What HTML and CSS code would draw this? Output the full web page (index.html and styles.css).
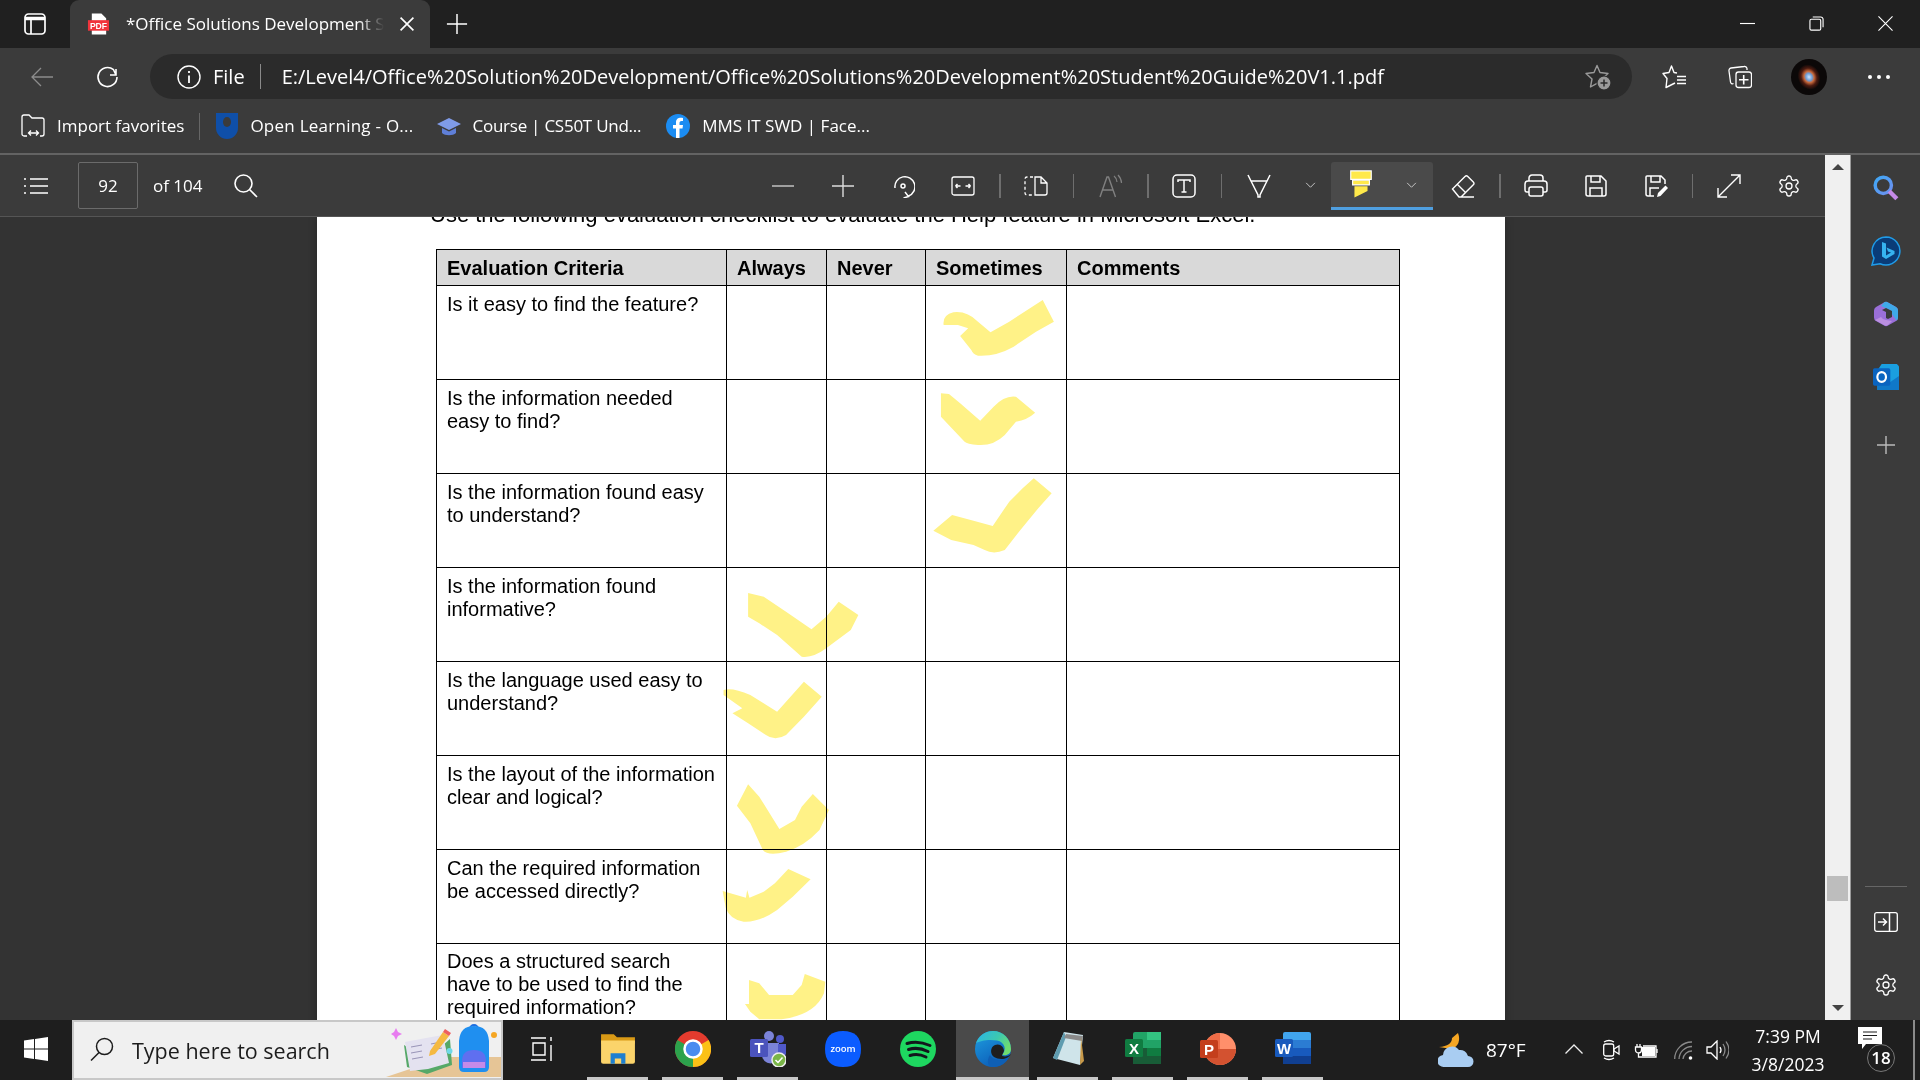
FILE: index.html
```html
<!DOCTYPE html>
<html lang="en">

<head>
    <meta charset="UTF-8">
    <title>Office Solutions Development Student Guide</title>
    <link rel="stylesheet" href="styles.css">
</head>

<body>
    <svg class="defs" aria-hidden="true">
        <symbol id="gear" viewBox="0 0 24 24">
            <path d="M12.22 2h-.44a2 2 0 0 0-2 2v.18a2 2 0 0 1-1 1.73l-.43.25a2 2 0 0 1-2 0l-.15-.08a2 2 0 0 0-2.73.73l-.22.38a2 2 0 0 0 .73 2.73l.15.1a2 2 0 0 1 1 1.72v.51a2 2 0 0 1-1 1.74l-.15.09a2 2 0 0 0-.73 2.73l.22.38a2 2 0 0 0 2.73.73l.15-.08a2 2 0 0 1 2 0l.43.25a2 2 0 0 1 1 1.73V20a2 2 0 0 0 2 2h.44a2 2 0 0 0 2-2v-.18a2 2 0 0 1 1-1.73l.43-.25a2 2 0 0 1 2 0l.15.08a2 2 0 0 0 2.73-.73l.22-.39a2 2 0 0 0-.73-2.73l-.15-.08a2 2 0 0 1-1-1.74v-.5a2 2 0 0 1 1-1.74l.15-.09a2 2 0 0 0 .73-2.73l-.22-.38a2 2 0 0 0-2.73-.73l-.15.08a2 2 0 0 1-2 0l-.43-.25a2 2 0 0 1-1-1.73V4a2 2 0 0 0-2-2z" />
            <circle cx="12" cy="12" r="3" />
        </symbol>
        <linearGradient id="edgeGrad" x1="0" y1="0" x2=".6" y2="1">
            <stop offset="0" stop-color="#1f9fe0" />
            <stop offset="1" stop-color="#0b5cb8" />
        </linearGradient>
        <linearGradient id="edgeTop" x1="0" y1="0" x2="1" y2=".5">
            <stop offset="0" stop-color="#2ab4e8" />
            <stop offset=".6" stop-color="#3cc8b0" />
            <stop offset="1" stop-color="#6fdc70" />
        </linearGradient>
        <radialGradient id="nebula">
            <stop offset="0" stop-color="#cfe4ff" />
            <stop offset=".28" stop-color="#6f9fd8" />
            <stop offset=".45" stop-color="#c7683a" />
            <stop offset=".7" stop-color="#4b1a10" />
            <stop offset="1" stop-color="#0b0808" />
        </radialGradient>
    </svg>

    <div class="titlebar">
        <div class="tab-toggle">
            <svg class="ico tog" viewBox="0 0 24 24"><rect x="2" y="2" width="20" height="20" rx="3.500" /><path d="M2 6.500h20" stroke-width="3.500" /><path d="M8 7v15" /></svg>
        </div>
        <div class="tab">
            <svg class="tab-pdf" viewBox="0 0 24 24"><path d="M5 1h10l5 5v17H5z" fill="#fff" /><rect x="1" y="8" width="22" height="11" fill="#f0343c" /><text x="12" y="17" class="pdf-text">PDF</text></svg>
            <span class="tab-title">*Office Solutions Development Student Guide V1.1.pdf</span>
            <svg class="ico tab-close" viewBox="0 0 24 24"><path d="M5 5l14 14M19 5L5 19" stroke-width="1.800" /></svg>
        </div>
        <svg class="ico tab-new" viewBox="0 0 24 24"><path d="M12 1v22M1 12h22" stroke-width="1.600" /></svg>
        <div class="win-controls">
            <div class="win-btn"><svg class="ico small" viewBox="0 0 16 16"><path d="M0 8h16" /></svg></div>
            <div class="win-btn"><svg class="ico small" viewBox="0 0 16 16"><rect x="1" y="3.500" width="11.500" height="11.500" rx="1.500" /><path d="M4 1h8.500A2.500 2.500 0 0 1 15 3.500V12" /></svg></div>
            <div class="win-btn"><svg class="ico small" viewBox="0 0 16 16"><path d="M.5.5l15 15M15.500.5l-15 15" /></svg></div>
        </div>
    </div>

    <div class="navbar">
        <svg class="ico nav-back" viewBox="0 0 24 24"><path d="M23 12H2M11 3l-9 9 9 9" /></svg>
        <svg class="ico nav-reload" viewBox="0 0 24 24"><path d="M20 4v6h-6M21 12a9.500 9.500 0 1 1-3.500-7.300L20 10" stroke-width="1.600" /></svg>
        <div class="address">
            <svg class="ico info" viewBox="0 0 24 24"><circle cx="12" cy="12" r="11" stroke-width="1.400" /><path d="M12 10.500V18M12 6v2" stroke-width="1.800" /></svg>
            <span class="addr-file">File</span>
            <span class="addr-sep"></span>
            <span class="addr-url">E:/Level4/Office%20Solution%20Development/Office%20Solutions%20Development%20Student%20Guide%20V1.1.pdf</span>
            <svg class="ico star-add" viewBox="0 0 26 26"><path d="M12 1.500L15 8.500L23 9.500L17 15L18.500 23L12 19.300L5.500 23L7 15L1 9.500L9 8.500Z" stroke="#9a9a9a" stroke-linejoin="round" stroke-width="1.400" /><circle cx="19" cy="19" r="7" fill="#9a9a9a" stroke="#2b2b2b" stroke-width="1.200" /><path d="M19 15.500v7M15.500 19h7" stroke="#2b2b2b" stroke-width="1.500" /></svg>
        </div>
        <svg class="ico nav-fav" viewBox="0 0 24 24"><path d="M15 8L12 7.500L9.500 1L7 7.500L1 8.500L5 13.500L4 22.500L10 19.500L13 18" stroke-linejoin="round" stroke-width="1.400" /><path d="M15 11.500h9M15 15h9M15 18.500h9" stroke-width="1.400" /></svg>
        <svg class="ico nav-coll" viewBox="0 0 24 24"><path d="M19 5V3.500A2.500 2.500 0 0 0 16 1.500L3 3A2.500 2.500 0 0 0 1 6l1.500 11a2 2 0 0 0 3 1.500" /><rect x="8" y="7" width="15.500" height="15.500" rx="2.500" /><path d="M15.700 10v9.500M11 14.800h9.500" stroke-width="1.600" /></svg>
        <svg class="avatar" viewBox="0 0 36 36"><circle cx="18" cy="18" r="18" fill="#0b0808" /><ellipse cx="18" cy="18" rx="11" ry="13" fill="url(#nebula)" transform="rotate(-25 18 18)" /></svg>
        <div class="nav-dots"><span></span><span></span><span></span></div>
    </div>

    <div class="bookmarks">
        <svg class="ico bm-import" viewBox="0 0 24 24"><path d="M6 22H3a2 2 0 0 1-2-2V3a2 2 0 0 1 2-2h5l3 3h10a2 2 0 0 1 2 2v14a2 2 0 0 1-2 2h-2M8 19h9M10 16.500L7.500 19l2.500 2.500M15 16.500l2.500 2.500-2.500 2.500" /></svg>
        <span class="bm-label">Import favorites</span>
        <span class="bm-sep"></span>
        <svg class="bm-icon" viewBox="0 0 22 26"><path d="M0 0h22v15a11 11 0 0 1-22 0z" fill="#0f4fa8" /><ellipse cx="11" cy="9" rx="4" ry="5" fill="#3b3b3b" /></svg>
        <span class="bm-label open">Open Learning - O...</span>
        <svg class="bm-icon cap" viewBox="0 0 24 24"><path d="M12 4L0 10l12 6 12-6z" fill="#7f9be8" /><path d="M5 14v5c3 3 11 3 14 0v-5l-7 3.500z" fill="#5f7fd8" /></svg>
        <span class="bm-label course">Course | CS50T Und...</span>
        <svg class="bm-icon fb" viewBox="0 0 24 24"><circle cx="12" cy="12" r="12" fill="#1b8cf2" /><path d="M13.500 24v-9.500h3l.5-3.500h-3.500V9c0-1 .5-2 2-2H17V4c-3.500-.7-7 0-7 4.500V11H7v3.500h3V24z" fill="#fff" /></svg>
        <span class="bm-label">MMS IT SWD | Face...</span>
    </div>

    <div class="workspace">
        <div class="viewer">
            <div class="pdf-toolbar">
                <svg class="ico toc" viewBox="0 0 24 24"><path d="M6 5h18M6 12h18M6 19h18M0 5h2M0 12h2M0 19h2" stroke-width="1.600" /></svg>
                <div class="page-input">92</div>
                <span class="page-count">of 104</span>
                <svg class="ico pdf-search" viewBox="0 0 24 24"><circle cx="9.500" cy="9.500" r="8.500" stroke-width="1.600" /><path d="M15.500 15.500L23 23" stroke-width="1.600" /></svg>

                <div class="tool-group">
                    <div class="tool"><svg class="ico" viewBox="0 0 24 24"><path d="M1 12h22" stroke-width="1.400" stroke="#ccc" /></svg></div>
                    <div class="tool"><svg class="ico" viewBox="0 0 24 24"><path d="M1 12h22M12 1v22" stroke-width="1.400" stroke="#ddd" /></svg></div>
                    <div class="tool"><svg class="ico" viewBox="0 0 24 24"><path d="M4 14A10 10 0 1 1 17.500 22M14 18l3.500 4.500-5 1.500" stroke-width="1.500" /><circle cx="12" cy="12" r="2" stroke-width="1.500" /></svg></div>
                    <div class="tool"><svg class="ico" viewBox="0 0 24 24"><rect x="1" y="3" width="22" height="18" rx="2" /><path d="M4.500 12h5M4.500 12l2-2M4.500 12l2 2M19.500 12h-5M19.500 12l-2-2M19.500 12l-2 2" stroke-width="1.500" /></svg></div>
                    <span class="tool-sep"></span>
                    <div class="tool"><svg class="ico" viewBox="0 0 24 24"><path d="M9 3H3a2 2 0 0 0-2 2v14a2 2 0 0 0 2 2h6" stroke-dasharray="3 2.500" /><path d="M11 3h6l6 6v10a2 2 0 0 1-2 2H11zM17 3v6h6" /></svg></div>
                    <span class="tool-sep thin"></span>
                    <div class="tool"><svg class="ico" viewBox="0 0 24 24"><path d="M1 23L8 3h1.500l7 20M4 16h10" stroke="#808080" stroke-width="1.400" /><path d="M15 2a8 8 0 0 1 3 6M19 1a12 12 0 0 1 3.500 8" stroke="#808080" stroke-width="1.200" /></svg></div>
                    <span class="tool-sep"></span>
                    <div class="tool"><svg class="ico" viewBox="0 0 24 24"><rect x="1" y="1" width="22" height="22" rx="4" stroke-width="1.500" /><path d="M6 8V6h12v2M12 6v12M9.500 18h5" stroke-width="1.500" /></svg></div>
                    <span class="tool-sep thin"></span>
                    <div class="tool"><svg class="ico" viewBox="0 0 24 24"><path d="M1 1l3 6h16l3-6M4 7l7 14v2h2v-2l7-14" stroke-width="1.500" /></svg></div>
                    <div class="tool-chev"><svg class="chev" viewBox="0 0 12 8"><path d="M1 1l5 5 5-5" /></svg></div>
                    <div class="tool-active">
                        <svg class="hl-icon" viewBox="0 0 24 30"><path d="M1 1h22v9H1z" fill="#ffe94a" stroke="#fff" stroke-width="1.200" /><path d="M3 11h18v5H3z" fill="#ffe94a" stroke="#fff" stroke-width="1.200" /><path d="M5 17.500h14v5l-14 7z" fill="#ffe94a" /></svg>
                        <svg class="chev" viewBox="0 0 12 8"><path d="M1 1l5 5 5-5" /></svg>
                    </div>
                    <div class="tool"><svg class="ico" viewBox="0 0 24 24"><path d="M1.500 15L14 2.500a2 2 0 0 1 2.800 0l5.500 5.500a2 2 0 0 1 0 2.800L10 23H8zM6 10l8 8M8 23h15" stroke-width="1.400" /></svg></div>
                    <span class="tool-sep"></span>
                    <div class="tool"><svg class="ico" viewBox="0 0 24 24"><path d="M5 7V4a3 3 0 0 1 3-3h8a3 3 0 0 1 3 3v3M5 18H3a2 2 0 0 1-2-2V10a3 3 0 0 1 3-3h16a3 3 0 0 1 3 3v6a2 2 0 0 1-2 2h-2" stroke-width="1.500" /><rect x="5" y="13" width="14" height="9" rx="2" stroke-width="1.500" /></svg></div>
                    <div class="tool"><svg class="ico" viewBox="0 0 24 24"><path d="M3 2h14l5 5v13a2 2 0 0 1-2 2H4a2 2 0 0 1-2-2V3a1 1 0 0 1 1-1zM7 2v6h9V2M6 22v-8h12v8" stroke-width="1.500" /></svg></div>
                    <div class="tool"><svg class="ico" viewBox="0 0 24 24"><path d="M10 22H4a2 2 0 0 1-2-2V3a1 1 0 0 1 1-1h14l4 4v4M7 2v6h9V2M6 22v-8h9" stroke-width="1.500" /><path d="M13 23l1-4 7.500-7.500 2.500 2.500L16.500 22z" fill="#fff" stroke="none" /></svg></div>
                    <span class="tool-sep end"></span>
                    <div class="tool"><svg class="ico" viewBox="0 0 24 24"><path d="M14 1h9v9M23 1L1 23M1 14v9h9" stroke-width="1.400" /></svg></div>
                    <div class="tool"><svg class="ico" viewBox="0 0 24 24"><use href="#gear" /></svg></div>
                </div>
            </div>

            <div class="doc">
                <div class="page">
                    <p class="page-intro">Use the following evaluation checklist to evaluate the Help feature in Microsoft Excel.</p>
                    <table class="checklist">
                        <colgroup>
                            <col class="c-criteria"><col class="c-always"><col class="c-never"><col class="c-some"><col class="c-comment">
                        </colgroup>
                        <thead>
                            <tr><th>Evaluation Criteria</th><th>Always</th><th>Never</th><th>Sometimes</th><th>Comments</th></tr>
                        </thead>
                        <tbody>
                            <tr><td>Is it easy to find the feature?</td><td></td><td></td><td></td><td></td></tr>
                            <tr><td>Is the information needed<br>easy to find?</td><td></td><td></td><td></td><td></td></tr>
                            <tr><td>Is the information found easy<br>to understand?</td><td></td><td></td><td></td><td></td></tr>
                            <tr><td>Is the information found<br>informative?</td><td></td><td></td><td></td><td></td></tr>
                            <tr><td>Is the language used easy to<br>understand?</td><td></td><td></td><td></td><td></td></tr>
                            <tr><td>Is the layout of the information<br>clear and logical?</td><td></td><td></td><td></td><td></td></tr>
                            <tr><td>Can the required information<br>be accessed directly?</td><td></td><td></td><td></td><td></td></tr>
                            <tr class="row-tight"><td>Does a structured search<br>have to be used to find the<br>required information?</td><td></td><td></td><td></td><td></td></tr>
                        </tbody>
                    </table>
                </div>
                <!-- highlighter strokes drawn over the table -->
                <svg class="ticks" viewBox="0 217 1825 803">
                    <g transform="translate(420 200) scale(.4464 .3333)">
                        <path d="M1173 375Q1170 345 1195 337Q1225 332 1250 365L1278 397L1320 365L1395 300L1420 365L1380 395L1330 440Q1290 470 1250 467Q1238 462 1235 450L1210 408L1228 385L1205 375Z" />
                        <path d="M1167 580L1185 582L1210 610L1255 662L1285 620Q1310 585 1335 590L1378 638Q1360 660 1335 665L1310 705Q1285 738 1250 735Q1225 732 1220 725L1195 690L1167 650Z" />
                        <path d="M1375 835L1415 880L1385 925L1345 990L1310 1050Q1285 1065 1265 1050L1240 1035L1190 1020L1150 992L1192 945L1240 962L1283 978L1320 905L1350 865Z" />
                    </g>
                    <g transform="translate(420 600) scale(.4464 .3333)">
                        <path d="M735-21L770-10L820 35L877 88L910 50L938 5L982 45L965 90L910 145Q880 175 855 170L838 150L800 105L760 70L735 50Z" />
                        <path d="M680 270Q700 262 740 285L800 335L860 245L900 290L860 350L820 405Q795 425 775 405L735 370L700 340L722 325L680 285Z" />
                        <path d="M735 553L760 590L805 687L840 660L855 620L880 582L916 630L895 690Q860 740 820 755Q780 770 768 750L740 670L710 617Z" />
                        <path d="M678 873L730 893L733 870L738 893L770 875L795 850L825 807L875 838L835 890L800 930Q760 968 725 965Q695 960 685 925Z" />
                        <path d="M737 1140L760 1150L782 1185H835L855 1155L862 1122L908 1145L905 1180Q885 1245 810 1258H760L740 1235L728 1212H737Z" />
                    </g>
                </svg>
            </div>
        </div>

        <div class="scrollbar">
            <span class="arrow up"></span>
            <span class="thumb"></span>
            <span class="arrow down"></span>
        </div>

        <div class="sidebar">
            <svg class="side-search" viewBox="0 0 24 24"><defs><linearGradient id="sg" x1="0" y1="0" x2="1" y2="1"><stop offset="0" stop-color="#3ea8f5" /><stop offset="1" stop-color="#6f8ff0" /></linearGradient></defs><circle cx="9.500" cy="9.500" r="7.500" fill="none" stroke="url(#sg)" stroke-width="3.200" /><path d="M15 15l7 7" stroke="#c58ae8" stroke-width="4" /></svg>
            <svg class="side-icon bing" viewBox="0 0 30 30"><path d="M15 1a14 14 0 1 1-6 26.700L1 29l2-7A14 14 0 0 1 15 1z" fill="#0a3c78" stroke="#1f9be8" stroke-width="1.500" /><path d="M11 6l4 1.500v12l5-3-3-1-1.500-4 8 3.500v3l-8.500 5-4-2.500z" fill="#36b3f0" /></svg>
            <svg class="side-icon copilot" viewBox="0 0 24 26"><path d="M10 1.500q2-1.500 4 0l8 4.500q2 1 2 3.500v7q0 2.500-2 3.500l-8 4.500q-2 1.500-4 0l-8-4.500q-2-1-2-3.500v-7q0-2.500 2-3.500z" fill="#9a6fd8" /><path d="M10 1.500q2-1.500 4 0l8 4.500q2 1 2 3.500v7q0 2-1.500 3L18 13q0-3-3-4.500L7 5z" fill="#3fa9e8" /><path d="M8 9l4-2 6 3v6l-4 2-2-1v-6z" fill="#3b3b3b" /><path d="M1 19l6-3q2 3 5 3l6 1-4 4q-2 1.500-4 0z" fill="#bb8fe0" /></svg>
            <svg class="side-icon outlook" viewBox="0 0 24 24"><path d="M8 0h14l2 2v22H4V6z" fill="#1a9fe0" /><path d="M4 13l10 5 10-7v13H4z" fill="#0f78c8" /><rect x="0" y="4" width="16" height="16" rx="1.500" fill="#0a64c0" /><ellipse cx="8" cy="12" rx="4" ry="4.500" fill="none" stroke="#fff" stroke-width="2" /></svg>
            <svg class="ico side-plus" viewBox="0 0 18 18"><path d="M9 0v18M0 9h18" stroke="#bbb" stroke-width="1.400" /></svg>
            <span class="side-rule"></span>
            <svg class="ico side-panel" viewBox="0 0 24 20"><rect x=".7" y=".7" width="22.600" height="18.600" rx="2" /><path d="M15.500 1v18M4 10h8M9 6.500l3.500 3.500L9 13.500" stroke-width="1.500" /></svg>
            <svg class="ico side-gear" viewBox="0 0 24 24"><use href="#gear" /></svg>
        </div>
    </div>

    <div class="taskbar">
        <div class="start">
            <svg class="start-logo" viewBox="0 0 24 24"><path d="M0 3.400l10-1.400v9.500H0zM11 1.900L24 0v11.500H11zM0 12.500h10V22L0 20.600zM11 12.500h13V24l-13-1.900z" fill="#fff" /></svg>
        </div>
        <div class="search">
            <svg class="search-glass" viewBox="0 0 24 24"><circle cx="14.500" cy="9.500" r="8" fill="none" stroke="#1c1c1c" stroke-width="1.500" /><path d="M9 15.500L1 23.500" stroke="#1c1c1c" stroke-width="1.500" /></svg>
            <span class="search-text">Type here to search</span>
            <svg class="search-art" viewBox="385 1022 118 58">
                <path d="M386 1078L446 1058H503V1078z" fill="#e6c596" />
                <path d="M404 1046L427 1060L450 1040L452 1066L427 1075L407 1068z" fill="#56a868" />
                <path d="M405 1043L426 1039L428 1070L410 1072zM428 1070L426 1039L443 1036L449 1064z" fill="#e4e2f0" />
                <path d="M411 1048L422 1046M411 1054L422 1052M412 1060L423 1058M431 1045L441 1043M431 1051L442 1049" stroke="#9a96b8" stroke-width="1.200" />
                <path d="M430 1052L443 1033L449 1037L435 1055L429 1057z" fill="#f5b942" />
                <path d="M443 1033L445 1030L451 1034L449 1037z" fill="#ee5f5f" />
                <path d="M396 1029L398 1033L402 1035L398 1037L396 1041L394 1037L391 1035L394 1033z" fill="#e87cf0" />
                <circle cx="494" cy="1036" r="3" fill="#f5a623" />
                <circle cx="449.500" cy="1052" r="3" fill="#6fd8e8" />
                <path d="M470 1030a4 4 0 0 1 8 0" fill="none" stroke="#1f6fe0" stroke-width="2" />
                <path d="M459 1042Q460 1027 474 1027Q488 1027 489 1042V1068Q489 1073 484 1073H464Q459 1073 459 1068z" fill="#1f8ff0" />
                <path d="M462 1062Q462 1051 474 1051Q486 1051 486 1062V1069H462z" fill="#5f6ff0" />
                <path d="M463 1063H485V1069H463z" fill="#c58ae8" />
            </svg>
        </div>
        <div class="task-view">
            <svg class="ico" viewBox="0 0 24 24"><path d="M1 1h15M1 23h15M3 6h12v12H3zM21 0v4M21 8v16" stroke-width="1.400" /></svg>
        </div>
        <div class="task-item on">
            <svg class="task-icon" viewBox="0 0 34 34"><path d="M1 3h12l3 3h17v6H1z" fill="#d99a16" /><path d="M1 9h32v20a2 2 0 0 1-2 2H3a2 2 0 0 1-2-2z" fill="#fbd46b" /><path d="M10 31V21h14v10h-4v-5h-6v5z" fill="#1e7fd0" /></svg>
        </div>
        <div class="task-item on">
            <svg class="task-icon" viewBox="0 0 36 36"><circle cx="18" cy="18" r="18" fill="#e33b2e" /><path d="M18 18L33.600 9A18 18 0 0 1 18 36z" fill="#fbc116" /><path d="M18 18V36A18 18 0 0 1 2.400 9z" fill="#2ca24c" /><circle cx="18" cy="18" r="8.500" fill="#4a8cf0" stroke="#fff" stroke-width="2.500" /></svg>
        </div>
        <div class="task-item on">
            <svg class="task-icon" viewBox="0 0 36 36"><circle cx="19" cy="5" r="5" fill="#7b83d8" /><circle cx="30" cy="8" r="4" fill="#5059c9" /><path d="M12 12h17v12a8 8 0 0 1-17 0z" fill="#7b83d8" /><path d="M28 13h8v10a5 5 0 0 1-8 2z" fill="#5059c9" /><rect x="0" y="8" width="18" height="18" rx="1.500" fill="#4b53bc" /><text x="9" y="22" class="mini-text">T</text><circle cx="29" cy="29" r="7" fill="#7ab648" stroke="#eee" stroke-width="1.500" /><path d="M25.500 29l2.500 2.500 4.500-5" fill="none" stroke="#fff" stroke-width="1.500" /></svg>
        </div>
        <div class="task-item">
            <svg class="task-icon" viewBox="0 0 36 36"><path d="M18 0C30 0 36 6 36 18S30 36 18 36 0 30 0 18 6 0 18 0z" fill="#0b5cff" /><text x="18" y="21" class="zoom-text">zoom</text></svg>
        </div>
        <div class="task-item">
            <svg class="task-icon" viewBox="0 0 36 36"><circle cx="18" cy="18" r="18" fill="#1ed760" /><path d="M7 12.500Q18 9 30 14.500M8.500 18.500Q18 15.500 28 20.500M10 24.500Q18 22 26 26" fill="none" stroke="#12161c" stroke-width="3" stroke-linecap="round" /></svg>
        </div>
        <div class="task-item active">
            <svg class="task-icon" viewBox="0 0 36 36"><circle cx="18" cy="18" r="18" fill="url(#edgeGrad)" /><path d="M1 12C4 4 11 0 18 0C28 0 36 8 36 18C36 23 32 25 27 24C32 19 30 11 22 9.500C13 8 5 10 1 12Z" fill="url(#edgeTop)" /><path d="M36 22C33 28 24 28 19 25C15 22 15 15 20 13C25 11 29 15 29 19C28 21 27 23 27 24C31 25 34 24 36 22Z" fill="#1e1e1e" transform="translate(0 1)" /><path d="M15 24C18 29 26 31 33 28C29 34 23 36 18 36C13 36 11 30 15 24Z" fill="#0f5fb4" /></svg>
        </div>
        <div class="task-item on">
            <svg class="task-icon note" viewBox="0 0 32 36"><path d="M12 1L31 4L28 34L1 27z" fill="#cfe4ea" /><path d="M12 1L1 27L5 29L14 6z" fill="#5f9cb0" /><path d="M14 3l17 2-1 5-18-3z" fill="#8a8a8a" /><path d="M29 6L32 30L28 34z" fill="#c89a4a" /></svg>
        </div>
        <div class="task-item on">
            <svg class="task-icon" viewBox="0 0 36 34"><rect x="8" y="0" width="28" height="32" rx="2" fill="#21a366" /><rect x="22" y="0" width="14" height="8" fill="#33c481" /><rect x="22" y="16" width="14" height="8" fill="#107c41" /><rect x="8" y="16" width="14" height="16" fill="#185c37" /><rect x="22" y="24" width="14" height="8" fill="#185c37" /><rect x="0" y="7" width="18" height="18" rx="1.500" fill="#107c41" /><text x="9" y="21.500" class="mini-text">X</text></svg>
        </div>
        <div class="task-item on">
            <svg class="task-icon" viewBox="0 0 36 34"><circle cx="20" cy="17" r="16" fill="#ff8f6b" /><path d="M20 17H36A16 16 0 0 1 4 17z" fill="#d35230" /><path d="M20 1A16 16 0 0 0 4 17H20z" fill="#ed6c47" /><rect x="0" y="8" width="18" height="18" rx="1.500" fill="#c43e1c" /><text x="9" y="22.500" class="mini-text">P</text></svg>
        </div>
        <div class="task-item on">
            <svg class="task-icon" viewBox="0 0 36 34"><rect x="8" y="0" width="28" height="32" rx="2" fill="#41a5ee" /><rect x="8" y="8" width="28" height="8" fill="#2b7cd3" /><rect x="8" y="16" width="28" height="8" fill="#185abd" /><rect x="8" y="24" width="28" height="8" fill="#103f91" /><rect x="0" y="7" width="18" height="18" rx="1.500" fill="#185abd" /><text x="9" y="21.500" class="mini-text">W</text></svg>
        </div>

        <div class="tray">
            <svg class="tray-weather" viewBox="0 0 36 36"><path d="M20 1Q24 12 14 17L1 15Q14 14 14 6z" fill="#f5a623" /><path d="M6 35a6 6 0 0 1-1-12 9 9 0 0 1 16-5 8 8 0 0 1 9 6 5.500 5.500 0 0 1 0 11z" fill="#a9cdf2" /></svg>
            <span class="tray-temp">87°F</span>
            <svg class="ico tray-chevron" viewBox="0 0 18 10"><path d="M.5 9.500L9 1l8.500 8.500" stroke="#eee" /></svg>
            <svg class="ico tray-meet" viewBox="0 0 17 22"><rect x=".7" y="5" width="10" height="12" rx="2" /><path d="M11 10l5-3v8l-5-3zM1 3q5-3 10 0M1 19q5 3 10 0" /></svg>
            <svg class="ico tray-batt" viewBox="0 0 24 16"><path d="M3 2v3M6 2v3M1.500 5h6v3a3 3 0 0 1-6 0zM4.500 11v4H22V4H9" /><rect x="8" y="5" width="13" height="9" fill="#fff" stroke="none" /><path d="M23 7v4" /></svg>
            <svg class="ico tray-wifi" viewBox="0 0 19 19"><path d="M.7 18A17 17 0 0 1 18 1M5 18A13 13 0 0 1 18 5.500M9 18A9 9 0 0 1 18 10" stroke="#8a8a8a" /><circle cx="16.500" cy="17" r="1.800" fill="#fff" stroke="none" /></svg>
            <svg class="ico tray-vol" viewBox="0 0 23 20"><path d="M1 7v6h4l6 6V1L5 7z" /><path d="M14 7q2 3 0 6" /><path d="M17 4q4 6 0 12M20 1.500q6 8.500 0 17" stroke="#8a8a8a" /></svg>
            <div class="clock"><span>7:39 PM</span><span>3/8/2023</span></div>
            <div class="notif">
                <svg class="notif-icon" viewBox="0 0 24 22"><path d="M0 0h24v17H8l-4 5v-5H0z" fill="#fff" /><path d="M5 5h14M5 8.500h14M5 12h9" stroke="#1c1c1c" stroke-width="1.200" /></svg>
                <span class="notif-badge">18</span>
            </div>
            <span class="tray-line"></span>
        </div>
    </div>
</body>

</html>
```

FILE: styles.css
```css
* {
    box-sizing: border-box;
}

html,
body {
    margin: 0;
    padding: 0;
    width: 1920px;
    height: 1080px;
    overflow: hidden;
}

body {
    display: flex;
    flex-direction: column;
    background-color: #3b3b3b;
    color: #fff;
    font-family: "Open Sans", "Noto Sans", sans-serif;
}

.defs {
    position: absolute;
    width: 0;
    height: 0;
}

svg {
    display: block;
    flex: none;
}

.ico {
    width: 24px;
    height: 24px;
    fill: none;
    stroke: #fff;
    stroke-width: 1.3;
}

.ico.small {
    width: 15px;
    height: 15px;
    stroke-width: 1.2;
}

/* title bar */
.titlebar {
    display: flex;
    align-items: stretch;
    height: 48px;
    background-color: #202020;
}

.tab-toggle {
    display: flex;
    align-items: center;
    justify-content: center;
    width: 70px;
    padding-bottom: 1px;
}

.ico.tog {
    stroke-width: 1.700;
}

.tab {
    display: flex;
    align-items: center;
    width: 360px;
    padding-left: 17px;
    background-color: #3b3b3b;
    border-radius: 9px 9px 0 0;
}

.tab-pdf {
    width: 23px;
    height: 24px;
}

.pdf-text {
    font-family: "Liberation Sans", sans-serif;
    font-size: 9px;
    font-weight: 700;
    fill: #fff;
    text-anchor: middle;
}

.tab-title {
    width: 258px;
    margin-left: 16px;
    margin-bottom: 2px;
    font-size: 17px;
    white-space: nowrap;
    overflow: hidden;
    -webkit-mask-image: linear-gradient(to right, #000 90%, transparent);
    mask-image: linear-gradient(to right, #000 90%, transparent);
}

.tab-close {
    width: 22px;
    height: 22px;
    margin-left: 12px;
}

.tab-new {
    align-self: center;
    width: 22px;
    height: 22px;
    margin-left: 16px;
}

.win-controls {
    display: flex;
    margin-left: auto;
    margin-right: 0;
}

.win-btn {
    display: flex;
    align-items: center;
    justify-content: center;
    width: 69px;
    padding-bottom: 2px;
}

/* address row */
.navbar {
    display: flex;
    align-items: center;
    height: 56px;
    padding: 1px 0 0 30px;
}

.nav-back {
    stroke: #8c8c8c;
}

.nav-reload {
    margin-left: 42px;
}

.address {
    display: flex;
    align-items: center;
    width: 1482px;
    height: 45px;
    margin-left: 30px;
    padding-left: 27px;
    background-color: #2b2b2b;
    border-radius: 23px;
}

.addr-file {
    margin-left: 12px;
    font-size: 20px;
}

.addr-sep {
    width: 1px;
    height: 25px;
    margin: 0 21px 0 15px;
    background-color: #8a8a8a;
}

.addr-url {
    font-size: 20px;
    white-space: nowrap;
}

.star-add {
    width: 26px;
    height: 26px;
    margin-left: auto;
    margin-right: 21px;
}

.nav-fav {
    margin-left: 30px;
}

.nav-coll {
    margin-left: 42px;
}

.avatar {
    width: 36px;
    height: 36px;
    margin-left: 39px;
}

.nav-dots {
    display: flex;
    gap: 5px;
    margin-left: 41px;
}

.nav-dots span {
    width: 4px;
    height: 4px;
    background-color: #fff;
    border-radius: 50%;
}

/* favorites row */
.bookmarks {
    display: flex;
    align-items: center;
    height: 51px;
    padding: 0 0 5px 21px;
    border-bottom: 2px solid #636363;
    font-size: 17px;
}

.bm-label {
    margin-left: 12px;
    margin-bottom: 1px;
    white-space: nowrap;
}

.bm-label.open {
    letter-spacing: 0.25px;
}

.bm-label.course {
    letter-spacing: -0.25px;
}

.bm-sep {
    width: 1px;
    height: 27px;
    margin: 0 16px 0 15px;
    background-color: #666;
}

.bm-icon {
    width: 22px;
    height: 26px;
}

.bm-icon.cap {
    width: 24px;
    height: 24px;
    margin-left: 23px;
}

.bm-icon.fb {
    width: 24px;
    height: 24px;
    margin-left: 25px;
}

/* main area */
.workspace {
    display: flex;
    height: 865px;
}

.viewer {
    display: flex;
    flex-direction: column;
    width: 1825px;
}

.pdf-toolbar {
    display: flex;
    align-items: center;
    height: 62px;
    padding: 0 6px 0 24px;
    border-bottom: 1px solid #555;
}

.page-input {
    width: 60px;
    height: 47px;
    margin-left: 30px;
    border: 1px solid #6b6b6b;
    border-radius: 2px;
    font-size: 17px;
    line-height: 45px;
    text-align: center;
}

.page-count {
    margin-left: 15px;
    font-size: 17px;
    white-space: nowrap;
}

.pdf-search {
    margin-left: 31px;
}

.tool-group {
    display: flex;
    align-items: center;
    margin-left: auto;
}

.tool {
    display: flex;
    align-items: center;
    justify-content: center;
    width: 60px;
    height: 48px;
}

.tool-sep {
    width: 2px;
    height: 24px;
    margin: 0 5.500px;
    background-color: #6e6e6e;
}

.tool-sep.thin {
    width: 1px;
    margin: 0 7px;
}

.tool-sep.end {
    width: 1px;
    margin: 0 6px;
}

.tool-chev {
    display: flex;
    align-items: center;
    justify-content: center;
    width: 42px;
    height: 48px;
}

.chev {
    width: 11px;
    height: 7px;
    fill: none;
    stroke: #d5d5d5;
    stroke-width: 1;
}

.tool-active {
    display: flex;
    align-items: center;
    width: 102px;
    height: 48px;
    padding-left: 18px;
    background-color: #4a4a4a;
    border-bottom: 3px solid #4f9fe0;
    border-radius: 3px 3px 0 0;
}

.hl-icon {
    width: 24px;
    height: 28px;
}

.tool-active .chev {
    margin-left: 33px;
    margin-top: 3px;
}

.doc {
    position: relative;
    flex: 1;
    overflow: hidden;
    background-color: #333;
}

.page {
    width: 1188px;
    height: 900px;
    margin-left: 317px;
    padding: 1px 0 0 119px;
    overflow: hidden;
    background-color: #fff;
    box-shadow: 0 0 8px rgba(0, 0, 0, 0.25);
    color: #000;
    font-family: "Liberation Sans", Arial, sans-serif;
    font-size: 20px;
    line-height: 23px;
}

.page-intro {
    margin: -16px 0 22px -6px;
    font-size: 22px;
    line-height: 25px;
    white-space: nowrap;
}

.checklist {
    table-layout: fixed;
    width: 964px;
    border-collapse: collapse;
}

.c-criteria {
    width: 290px;
}

.c-always {
    width: 100px;
}

.c-never {
    width: 99px;
}

.c-some {
    width: 141px;
}

.checklist th,
.checklist td {
    padding: 0 0 0 10px;
    border: 1px solid #000;
    text-align: left;
    vertical-align: top;
}

.checklist th {
    height: 36px;
    padding-top: 7px;
    background-color: #d9d9d9;
    font-weight: 700;
}

.checklist td {
    height: 94px;
    padding-top: 7px;
    white-space: nowrap;
}

.checklist .row-tight td {
    padding-top: 6px;
}

.ticks {
    position: absolute;
    top: 0;
    left: 0;
    width: 1825px;
    height: 803px;
    fill: #fff287;
    mix-blend-mode: multiply;
    pointer-events: none;
}

/* page scrollbar */
.scrollbar {
    display: flex;
    flex-direction: column;
    align-items: center;
    width: 26px;
    padding: 9px 0 9px;
    background-color: #f0f0f0;
    border-right: 1px solid #9a9a9a;
}

.arrow {
    width: 0;
    height: 0;
    border-left: 6px solid transparent;
    border-right: 6px solid transparent;
}

.arrow.up {
    border-bottom: 6px solid #444;
}

.arrow.down {
    margin-top: auto;
    border-top: 6px solid #444;
}

.thumb {
    width: 21px;
    height: 25px;
    margin-top: 706px;
    background-color: #bdbdbd;
}

/* edge sidebar */
.sidebar {
    display: flex;
    flex-direction: column;
    align-items: center;
    width: 69px;
    padding-top: 19px;
}

.side-search {
    width: 26px;
    height: 28px;
}

.side-icon {
    width: 26px;
    height: 26px;
}

.side-icon.bing {
    width: 30px;
    height: 30px;
    margin-top: 34px;
}

.side-icon.copilot {
    margin-top: 35px;
}

.side-icon.outlook {
    margin-top: 37px;
}

.side-plus {
    width: 18px;
    height: 18px;
    margin-top: 46px;
}

.side-rule {
    width: 42px;
    height: 1px;
    margin-top: auto;
    background-color: #666;
}

.side-panel {
    height: 20px;
    margin-top: 25px;
}

.side-gear {
    margin-top: 41px;
    margin-bottom: 23px;
}

/* taskbar */
.taskbar {
    display: flex;
    height: 60px;
    background-color: #1e1e1e;
}

.start {
    display: flex;
    align-items: center;
    justify-content: center;
    width: 72px;
    padding-bottom: 2px;
}

.start-logo {
    width: 24px;
    height: 24px;
}

.search {
    display: flex;
    align-items: center;
    width: 431px;
    padding-left: 16px;
    overflow: hidden;
    background-color: #f0f0f0;
    border: 2px solid #c8c8c8;
    color: #1c1c1c;
}

.search-glass {
    width: 24px;
    height: 24px;
    margin-bottom: 2px;
}

.search-text {
    margin-left: 18px;
    font-size: 21.500px;
    white-space: nowrap;
}

.search-art {
    width: 118px;
    height: 58px;
    margin-left: auto;
    margin-right: -2px;
}

.task-view {
    display: flex;
    align-items: center;
    justify-content: center;
    width: 77px;
    padding-bottom: 3px;
}

.task-item {
    display: flex;
    align-items: center;
    justify-content: center;
    width: 61px;
    margin: 0 7px;
    border-bottom: 3px solid transparent;
}

.task-item.on {
    border-bottom-color: #c8c8c8;
}

.task-item.active {
    width: 73px;
    margin: 0 1px;
    background-color: #4a4a4a;
    border-bottom-color: #c8c8c8;
}

.task-icon {
    width: 36px;
    height: 36px;
}

.mini-text {
    font-family: "Liberation Sans", sans-serif;
    font-size: 15px;
    font-weight: 700;
    fill: #fff;
    text-anchor: middle;
}

.zoom-text {
    font-family: "Open Sans", sans-serif;
    font-size: 9.500px;
    font-weight: 600;
    fill: #fff;
    text-anchor: middle;
}

.tray {
    display: flex;
    align-items: center;
    margin-left: auto;
    height: 60px;
}

.tray-weather {
    width: 36px;
    height: 36px;
}

.tray-temp {
    width: 41px;
    margin-left: 12px;
    font-size: 19px;
    white-space: nowrap;
}

.tray-chevron {
    width: 18px;
    height: 10px;
    margin-left: 38px;
    margin-bottom: 3px;
}

.tray-meet {
    width: 17px;
    height: 22px;
    margin-left: 20px;
}

.tray-batt {
    width: 24px;
    height: 16px;
    margin-left: 14px;
}

.tray-wifi {
    width: 19px;
    height: 19px;
    margin-left: 16px;
}

.tray-vol {
    width: 23px;
    height: 20px;
    margin-left: 13px;
}

.clock {
    display: flex;
    flex-direction: column;
    align-items: center;
    width: 76px;
    margin-left: 21px;
    font-size: 17.500px;
    line-height: 28px;
    white-space: nowrap;
}

.notif {
    position: relative;
    width: 37px;
    height: 46px;
    margin-left: 32px;
}

.notif-icon {
    margin-top: 0;
    width: 24px;
    height: 22px;
}

.notif-badge {
    position: absolute;
    top: 17px;
    left: 9px;
    width: 28px;
    height: 28px;
    border: 1px solid #777;
    border-radius: 50%;
    background-color: #1e1e1e;
    font-size: 17px;
    font-weight: 600;
    line-height: 26px;
    text-align: center;
}

.tray-line {
    width: 2px;
    height: 60px;
    margin-left: 18px;
    margin-right: 5px;
    background-color: #8a8a8a;
}
```
